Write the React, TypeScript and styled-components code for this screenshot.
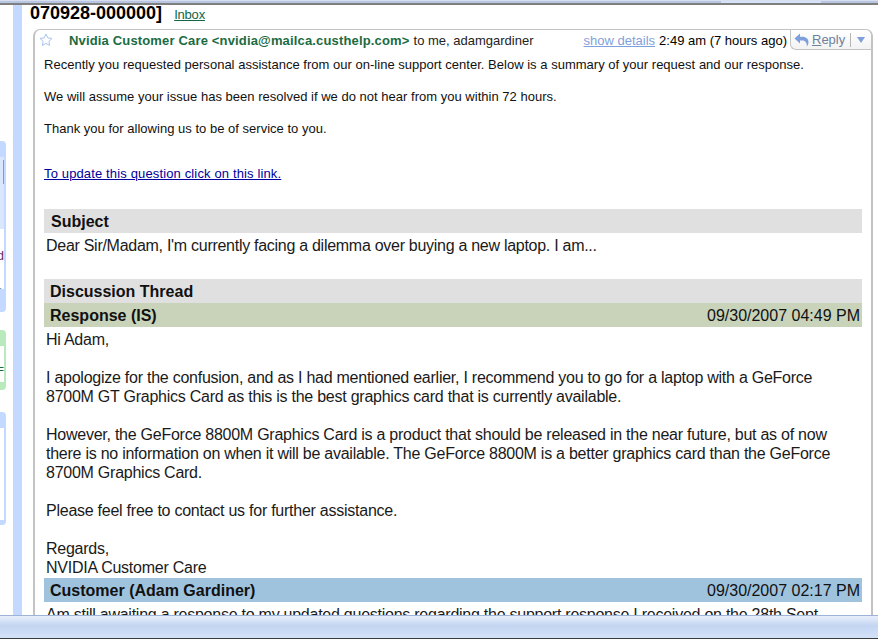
import React from 'react';
import styled, { createGlobalStyle } from 'styled-components';

const GlobalStyle = createGlobalStyle`
  html, body {
    margin: 0;
    padding: 0;
    background: #ffffff;
    font-family: "Liberation Sans", Arial, sans-serif;
  }
`;

const Page = styled.div`
  width: 878px;
  height: 640px;
  display: flex;
  flex-direction: column;
  overflow: hidden;
  background: #ffffff;
  color: #000000;
`;

const TopBar = styled.div`
  height: 5px;
  flex: none;
  display: flex;
  background: #b9c6e2;
  border-bottom: 2px solid #7f7f7f;
  box-sizing: border-box;
  border-top: 1px solid #d6def0;
`;

const TopTab = styled.div`
  margin-left: 721px;
  width: 100px;
  background: #d5e2f8;
`;

const Middle = styled.div`
  flex: 1;
  min-height: 0;
  display: flex;
  overflow: hidden;
`;

const Sidebar = styled.div`
  width: 13px;
  flex: none;
  padding-top: 136px;
  display: flex;
  flex-direction: column;
  box-sizing: border-box;
`;

const SidePanel = styled.div<{ $tone: string; $height: number; $gap: number }>`
  width: 6px;
  height: ${(p) => p.$height}px;
  margin-bottom: ${(p) => p.$gap}px;
  background: ${(p) => p.$tone};
  border-radius: 0 4px 4px 0;
  box-sizing: border-box;
  padding: 16px 2px 4px 0;
  flex: none;
  overflow: hidden;
  display: flex;
  flex-direction: column;
`;

const SideInner = styled.div<{ $height: number; $bg: string }>`
  height: ${(p) => p.$height}px;
  background: ${(p) => p.$bg};
  flex: none;
  overflow: hidden;
  font-size: 13px;
  line-height: 14px;
  direction: rtl;
  white-space: nowrap;
`;

const SideMark = styled.div`
  width: 1px;
  height: 24px;
  margin-top: 3px;
  background: #9a9a9a;
`;

const SideLine = styled.div<{ $top: number; $color: string }>`
  padding-top: ${(p) => p.$top}px;
  color: ${(p) => p.$color};
`;

const Rail = styled.div`
  width: 9px;
  flex: none;
  background: #c3d9ff;
`;

const Main = styled.div`
  flex: 1;
  min-width: 0;
  padding-left: 8px;
`;

const TitleRow = styled.div`
  height: 24px;
  display: flex;
  align-items: flex-start;
  gap: 12px;
`;

const Title = styled.div`
  font-size: 18px;
  font-weight: bold;
  line-height: 18px;
  margin-top: -1px;
`;

const InboxLink = styled.a`
  font-size: 13px;
  line-height: 14px;
  margin-top: 3px;
  color: #116644;
  text-decoration: underline;
  letter-spacing: -0.2px;
`;

const Card = styled.div`
  margin-left: 3px;
  width: 840px;
  box-sizing: border-box;
  border: 1px solid #c3c3c3;
  border-right-width: 2px;
  border-left-width: 2px;
  border-bottom: none;
  border-radius: 7px 7px 0 0;
  height: 640px;
`;

const CardHeader = styled.div`
  height: 20px;
  display: flex;
  align-items: center;
  font-size: 13px;
`;

const StarSlot = styled.div`
  width: 34px;
  padding-left: 4px;
  box-sizing: border-box;
  flex: none;
  display: flex;
`;

const Sender = styled.span`
  color: #1a6b3f;
  font-weight: bold;
  letter-spacing: 0.16px;
`;

const Recipients = styled.span`
  margin-left: 4px;
  color: #222222;
`;

const HeaderRight = styled.div`
  margin-left: auto;
  display: flex;
  align-items: center;
  height: 20px;
`;

const ShowDetails = styled.a`
  color: #7f9fdc;
  text-decoration: underline;
  margin-right: 4px;
`;

const ReplyBox = styled.div`
  margin-left: 3px;
  width: 81px;
  height: 20px;
  box-sizing: border-box;
  border-left: 1px solid #c3c3c3;
  border-bottom: 1px solid #c3c3c3;
  border-radius: 0 6px 0 6px;
  display: flex;
  align-items: center;
  padding-left: 3px;
  background: linear-gradient(#ffffff, #f3f3f3);
  color: #6f7f9c;
  font-size: 13px;
`;

const ReplyLabel = styled.span`
  margin-left: 3px;
  &::first-letter {
    text-decoration: underline;
  }
`;

const ReplyDivider = styled.span`
  width: 1px;
  height: 14px;
  margin-left: 5px;
  background: #b5b5b5;
`;

const ReplyCaret = styled.span`
  margin-left: 6px;
  width: 0;
  height: 0;
  border-left: 4px solid transparent;
  border-right: 4px solid transparent;
  border-top: 6px solid #7f9fdc;
`;

const Body = styled.div`
  padding: 7px 9px 0 9px;
  font-size: 13px;
  line-height: 16px;
  color: #111111;
`;

const Intro = styled.p`
  margin: 0 0 16px;
  letter-spacing: 0.015px;
`;

const UpdateLink = styled.a`
  display: block;
  margin-top: 29px;
  color: #00009c;
  text-decoration: underline;
  letter-spacing: 0.14px;
`;

const Section = styled.div`
  margin-top: 27px;
  font-size: 16px;
  line-height: 19px;
`;

const Bar = styled.div<{ $bg: string; $inset: number }>`
  height: 24px;
  box-sizing: border-box;
  display: flex;
  justify-content: space-between;
  align-items: center;
  padding: 0 2px 0 ${(p) => p.$inset}px;
  background: ${(p) => p.$bg};
  color: #111111;
`;

const BarTitle = styled.b`
  font-weight: bold;
`;

const Text = styled.p`
  margin: 0 0 19px;
  padding: 0 2px;
  color: #1a1a1a;
  letter-spacing: -0.25px;
`;

const SubjectText = styled(Text)`
  padding-top: 3px;
  margin-bottom: 24px;
  letter-spacing: -0.28px;
`;

const FirstText = styled(Text)`
  padding-top: 3px;
`;

const SignOff = styled(Text)`
  margin-bottom: 0;
  padding-bottom: 1px;
`;

const CutOffText = styled(Text)`
  margin-bottom: 0;
  padding-top: 3px;
`;

const BottomBar = styled.div`
  height: 24px;
  margin-bottom: 1px;
  flex: none;
  box-sizing: border-box;
  border-top: 1px solid #9db4d8;
  border-bottom: 1px solid #3a3a3a;
  background: linear-gradient(#e8effb, #c3d5f2 45%, #d5e2f8);
`;

const Star = () => (
  <svg width="14" height="14" viewBox="0 0 14 14" fill="none">
    <path
      d="M7 1l1.8 3.9 4.2.5-3.1 2.9.8 4.2L7 10.4l-3.7 2.1.8-4.2L1 5.4l4.2-.5z"
      stroke="#a9c4f0"
      strokeWidth="1"
    />
  </svg>
);

const ReplyArrow = () => (
  <svg width="15" height="14" viewBox="0 0 15 14" fill="none">
    <path d="M.5 5.500L6 .5v3.200h2.500c3.500 0 6 2.300 6 5.300 0 1.800-.6 3.300-1.700 4.500.3-3.500-1.500-6-4.300-6H6v3z" fill="#7f9fdc" />
  </svg>
);

export default function App() {
  return (
    <Page>
      <GlobalStyle />
      <TopBar>
        <TopTab />
      </TopBar>
      <Middle>
        <Sidebar>
          <SidePanel $tone="#c3d9ff" $height={171} $gap={18}>
            <SideInner $height={72} $bg="#d9e6fc">
              <SideMark />
            </SideInner>
            <SideInner $height={60} $bg="#ffffff">
              <SideLine $top={20} $color="#6b2a5c">d</SideLine>
              <SideLine $top={23} $color="#222222">@</SideLine>
            </SideInner>
          </SidePanel>
          <SidePanel $tone="#b9eabb" $height={60} $gap={22}>
            <SideInner $height={36} $bg="#ffffff">
              <SideLine $top={16} $color="#1a6b3f">=</SideLine>
            </SideInner>
          </SidePanel>
          <SidePanel $tone="#c3d9ff" $height={113} $gap={0}>
            <SideInner $height={92} $bg="#ffffff" />
          </SidePanel>
        </Sidebar>
        <Rail />
        <Main>
          <TitleRow>
            <Title>070928-000000]</Title>
            <InboxLink>Inbox</InboxLink>
          </TitleRow>
          <Card>
            <CardHeader>
              <StarSlot>
                <Star />
              </StarSlot>
              <Sender>Nvidia Customer Care &lt;nvidia@mailca.custhelp.com&gt;</Sender>
              <Recipients>to me, adamgardiner</Recipients>
              <HeaderRight>
                <ShowDetails>show details</ShowDetails>
                <span>2:49 am (7 hours ago)</span>
                <ReplyBox>
                  <ReplyArrow />
                  <ReplyLabel>Reply</ReplyLabel>
                  <ReplyDivider />
                  <ReplyCaret />
                </ReplyBox>
              </HeaderRight>
            </CardHeader>
            <Body>
              <Intro>Recently you requested personal assistance from our on-line support center. Below is a summary of your request and our response.</Intro>
              <Intro>We will assume your issue has been resolved if we do not hear from you within 72 hours.</Intro>
              <Intro>Thank you for allowing us to be of service to you.</Intro>
              <UpdateLink>To update this question click on this link.</UpdateLink>
              <Section>
                <Bar $bg="#e0e0e0" $inset={7}>
                  <BarTitle>Subject</BarTitle>
                </Bar>
                <SubjectText>Dear Sir/Madam, I'm currently facing a dilemma over buying a new laptop. I am...</SubjectText>
                <Bar $bg="#e0e0e0" $inset={6}>
                  <BarTitle>Discussion Thread</BarTitle>
                </Bar>
                <Bar $bg="#c8d3ba" $inset={6}>
                  <BarTitle>Response (IS)</BarTitle>
                  <span>09/30/2007 04:49 PM</span>
                </Bar>
                <FirstText>Hi Adam,</FirstText>
                <Text>I apologize for the confusion, and as I had mentioned earlier, I recommend you to go for a laptop with a GeForce 8700M GT Graphics Card as this is the best graphics card that is currently available.</Text>
                <Text>However, the GeForce 8800M Graphics Card is a product that should be released in the near future, but as of now there is no information on when it will be available. The GeForce 8800M is a better graphics card than the GeForce 8700M Graphics Card.</Text>
                <Text>Please feel free to contact us for further assistance.</Text>
                <SignOff>Regards,<br />NVIDIA Customer Care</SignOff>
                <Bar $bg="#9fc3dd" $inset={6}>
                  <BarTitle>Customer (Adam Gardiner)</BarTitle>
                  <span>09/30/2007 02:17 PM</span>
                </Bar>
                <CutOffText>Am still awaiting a response to my updated questions regarding the support response I received on the 28th Sept</CutOffText>
              </Section>
            </Body>
          </Card>
        </Main>
      </Middle>
      <BottomBar />
    </Page>
  );
}
